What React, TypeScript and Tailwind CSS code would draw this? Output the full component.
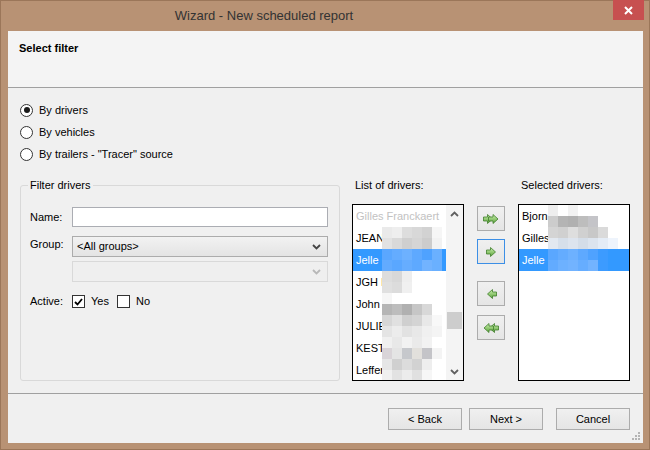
import React from 'react';

type Cells = string[][];

interface Driver {
  name: string;
  cells?: Cells;
  selected?: boolean;
  muted?: boolean;
}

const leftDrivers: Driver[] = [
  { name: 'Gilles Franckaert', muted: true },
  {
    name: 'JEAN',
    cells: [
      ['#eaeaea', '#eeeeee', '#dddddd', '#d8d8d8', '#d2d2d2', '#f6f6f6'],
      ['#e2e2e2', '#d9d9d9', '#cfcfcf', '#d5d5d5', '#cccccc', '#f2f2f2'],
    ],
  },
  {
    name: 'Jelle C',
    selected: true,
    cells: [
      ['#5aa7ff', '#64acff', '#6db1ff', '#5ea9ff', '#4fa2ff', '#6ab0ff'],
      ['#62abff', '#5aa7ff', '#66adff', '#5ea9ff', '#72b3ff', '#6ab0ff'],
    ],
  },
  {
    name: 'JGH I',
    cells: [
      ['#dddddd', '#d8d8d8', '#eeeeee', '#ffffff'],
      ['#e0e0e0', '#dcdcdc', '#f0f0f0', '#ffffff'],
    ],
  },
  {
    name: 'John',
    cells: [
      ['#f6f6f6', '#ffffff', '#ffffff', '#ffffff', '#ffffff'],
      ['#b5b5b5', '#bdbdbd', '#b0b0b0', '#c6c6c6', '#d8d8d8'],
    ],
  },
  {
    name: 'JULIE',
    cells: [
      ['#d6d6d6', '#e0e0e0', '#cfcfcf', '#d4d4d4', '#e8e8e8', '#f8f8f8'],
      ['#e4e4e4', '#ececec', '#e2e2e2', '#e8e8e8', '#f0f0f0', '#f4f4f4'],
    ],
  },
  {
    name: 'KEST',
    cells: [
      ['#f0f0f0', '#e8e8e8', '#f2f2f2', '#eaeaea', '#f2f2f2', '#ffffff'],
      ['#d9d4d8', '#e4e4e4', '#c6c8cc', '#e2e0dc', '#c4c4c8', '#f4f4f4'],
    ],
  },
  {
    name: 'Leffer',
    cells: [
      ['#e6e6e6', '#d0d0d0', '#dcdcdc', '#d2d2d2', '#eeeeee'],
      ['#f0f0f0', '#e2e2e2', '#ececec', '#e0e0e0', '#f6f6f6'],
    ],
  },
];

const rightDrivers: Driver[] = [
  {
    name: 'Bjorn',
    cells: [
      ['#eeeeee', '#ffffff', '#f2f2f2', '#ffffff', '#ffffff'],
      ['#cccccc', '#b4b4b4', '#b0b0b0', '#bdbdbd', '#c4c4c8'],
    ],
  },
  {
    name: 'Gilles',
    cells: [
      ['#d4d4d4', '#d0d0d0', '#dedede', '#d0d0d0', '#c8c8c8', '#dadada', '#ffffff'],
      ['#e2e8f0', '#d6dfea', '#dde4ee', '#d4dde8', '#dce4ee', '#e4ecf6', '#eef4fc'],
    ],
  },
  {
    name: 'Jelle C',
    selected: true,
    cells: [
      ['#5aa7ff', '#64acff', '#6db1ff', '#5ea9ff', '#4fa2ff', '#3c9bff'],
      ['#62abff', '#6db1ff', '#72b3ff', '#66adff', '#72b3ff', '#3c9bff'],
    ],
  },
];

const Mosaic = ({ cells }: { cells: Cells }) => (
  <div className="flex flex-col">
    {cells.map((row, i) => (
      <div key={i} className="flex">
        {row.map((c, j) => (
          <div key={j} className="w-[10px] h-[11px]" style={{ backgroundColor: c }} />
        ))}
      </div>
    ))}
  </div>
);

const ListRow = ({ d }: { d: Driver }) => (
  <div
    className={`relative flex items-center h-[22px] pl-[3px] whitespace-nowrap ${
      d.selected ? 'bg-[#3399ff] text-white' : d.muted ? 'text-[#c2c2c2]' : 'text-black'
    }`}
  >
    <span>{d.name}</span>
    {d.cells && (
      <div className="absolute left-[29px] top-0">
        <Mosaic cells={d.cells} />
      </div>
    )}
  </div>
);

const Chevron = ({ up, color = '#606060' }: { up?: boolean; color?: string }) => (
  <svg width="9" height="6" viewBox="0 0 9 6">
    <path
      d={up ? 'M1 5 L4.5 1.5 L8 5' : 'M1 1 L4.5 4.5 L8 1'}
      fill="none"
      stroke={color}
      strokeWidth="1.8"
    />
  </svg>
);

const GreenArrow = ({ id, dir, double }: { id: string; dir: 'left' | 'right'; double?: boolean }) => {
  const arrow = 'M0.5 3 H4.5 V0.5 L9.5 5 L4.5 9.5 V7 H0.5 Z';
  return (
    <svg
      width={double ? 16 : 11}
      height="10"
      viewBox={double ? '0 0 16 10' : '0 0 11 10'}
      style={{ transform: dir === 'left' ? 'scaleX(-1)' : undefined }}
    >
      <defs>
        <linearGradient id={id} x1="0" y1="0" x2="0" y2="1">
          <stop offset="0" stopColor="#cdf2b0" />
          <stop offset="1" stopColor="#5aa23a" />
        </linearGradient>
      </defs>
      <path d={arrow} fill={`url(#${id})`} stroke="#3f7d2b" strokeWidth="0.8" strokeLinejoin="round" />
      {double && (
        <path
          d="M5.5 3 H10 V0.5 L15 5 L10 9.5 V7 H5.5 Z"
          fill={`url(#${id})`}
          stroke="#3f7d2b"
          strokeWidth="0.8"
          strokeLinejoin="round"
        />
      )}
    </svg>
  );
};

const Radio = ({ checked, label }: { checked?: boolean; label: string }) => (
  <div className="flex items-center h-[22px]">
    <div className="w-[13px] h-[13px] rounded-full border border-[#333333] bg-white flex items-center justify-center">
      {checked && <div className="w-[6px] h-[6px] rounded-full bg-[#1a1a1a]" />}
    </div>
    <span className="ml-[6px]">{label}</span>
  </div>
);

const Checkbox = ({ checked }: { checked?: boolean }) => (
  <div className="w-[13px] h-[13px] border border-[#333333] bg-white flex items-center justify-center">
    {checked && (
      <svg width="9" height="8" viewBox="0 0 9 8">
        <path d="M1 4 L3.5 6.5 L8 1" fill="none" stroke="#000" strokeWidth="1.8" />
      </svg>
    )}
  </div>
);

const Btn = ({ children }: { children: React.ReactNode }) => (
  <div className="w-[74px] h-[22px] flex items-center justify-center bg-gradient-to-b from-[#f0f0f0] to-[#e5e5e5] border border-[#acacac]">
    {children}
  </div>
);

const MoveBtn = ({ children, focused }: { children: React.ReactNode; focused?: boolean }) => (
  <div
    className={`w-[28px] h-[25px] flex items-center justify-center bg-gradient-to-b from-[#f0f0f0] to-[#e5e5e5] border ${
      focused ? 'border-[#3c8fe6]' : 'border-[#acacac]'
    }`}
  >
    {children}
  </div>
);

export default function App() {
  return (
    <div className="w-[650px] h-[450px] bg-[#b89274] border border-[#9b7659] flex flex-col font-['Liberation_Sans',Arial,sans-serif] text-[11px] text-black">
      {/* Title bar */}
      <div className="h-[30px] flex items-start">
        <div className="flex-1 text-center pt-[7px] pr-[86px] text-[13px] leading-[15px] text-[#333333]">
          Wizard - New scheduled report
        </div>
        <div className="w-[31px] h-[20px] -mt-[1px] mr-[5px] bg-[#c75050] flex items-center justify-center">
          <svg width="9" height="9" viewBox="0 0 9 9">
            <path d="M1 1 L8 8 M8 1 L1 8" stroke="#ffffff" strokeWidth="2" />
          </svg>
        </div>
      </div>

      {/* Content */}
      <div className="flex-1 ml-[7px] mr-[6px] mb-[6px] bg-[#f0f0f0] flex flex-col">
        <div className="h-[57px] bg-[#f4f4f4] border-b border-[#a0a0a0] pl-[11px] pt-[11px] font-bold leading-[13px]">
          Select filter
        </div>

        <div className="flex-1 pl-[12px] pt-[11px] leading-[13px]">
          <Radio checked label="By drivers" />
          <Radio label="By vehicles" />
          <Radio label={'By trailers - "Tracer" source'} />

          <div className="flex items-start mt-[14px]">
            <fieldset className="w-[320px] h-[202px] border border-[#d9d9d9] rounded-[3px] pl-[7px]">
              <legend className="px-[2px] leading-[13px]">Filter drivers</legend>
              <div className="ml-[2px] mt-[15px]">
                <div className="flex items-center">
                  <span className="w-[42px]">Name:</span>
                  <div className="w-[256px] h-[20px] bg-white border border-[#abadb3]" />
                </div>
                <div className="flex items-start mt-[9px]">
                  <span className="w-[42px] pt-[2px]">Group:</span>
                  <div className="flex flex-col">
                    <div className="w-[256px] h-[21px] bg-gradient-to-b from-[#f2f2f2] to-[#e4e4e4] border border-[#acacac] flex items-center justify-between pl-[4px] pr-[6px]">
                      <span>&lt;All groups&gt;</span>
                      <Chevron color="#444444" />
                    </div>
                    <div className="w-[256px] h-[21px] mt-[4px] bg-[#efefef] border border-[#d9d9d9] flex items-center justify-end pr-[6px]">
                      <Chevron color="#b8b8b8" />
                    </div>
                  </div>
                </div>
                <div className="flex items-center mt-[13px]">
                  <span className="w-[42px]">Active:</span>
                  <Checkbox checked />
                  <span className="ml-[6px]">Yes</span>
                  <div className="ml-[8px]">
                    <Checkbox />
                  </div>
                  <span className="ml-[6px]">No</span>
                </div>
              </div>
            </fieldset>

            {/* List of drivers */}
            <div className="ml-[12px] flex flex-col">
              <span className="pl-[3px] leading-[13px]">List of drivers:</span>
              <div className="mt-[12px] w-[112px] h-[177px] border border-black bg-white flex overflow-hidden">
                <div className="flex-1 overflow-hidden">
                  {leftDrivers.map((d) => (
                    <ListRow key={d.name} d={d} />
                  ))}
                </div>
                <div className="w-[17px] bg-[#f4f4f4] flex flex-col">
                  <div className="h-[17px] flex items-center justify-center">
                    <Chevron up />
                  </div>
                  <div className="flex-1">
                    <div className="mt-[90px] h-[17px] mx-[1px] bg-[#cdcdcd]" />
                  </div>
                  <div className="h-[17px] flex items-center justify-center">
                    <Chevron />
                  </div>
                </div>
              </div>
            </div>

            {/* Move buttons */}
            <div className="ml-[13px] pt-[27px] flex flex-col">
              <MoveBtn>
                <GreenArrow id="g1" dir="right" double />
              </MoveBtn>
              <div className="mt-[8px]">
                <MoveBtn focused>
                  <GreenArrow id="g2" dir="right" />
                </MoveBtn>
              </div>
              <div className="mt-[17px]">
                <MoveBtn>
                  <GreenArrow id="g3" dir="left" />
                </MoveBtn>
              </div>
              <div className="mt-[9px]">
                <MoveBtn>
                  <GreenArrow id="g4" dir="left" double />
                </MoveBtn>
              </div>
            </div>

            {/* Selected drivers */}
            <div className="ml-[13px] flex flex-col">
              <span className="pl-[3px] leading-[13px]">Selected drivers:</span>
              <div className="mt-[12px] w-[112px] h-[177px] border border-black bg-white overflow-hidden">
                {rightDrivers.map((d) => (
                  <ListRow key={d.name} d={d} />
                ))}
              </div>
            </div>
          </div>
        </div>

        {/* Footer */}
        <div className="relative h-[50px] border-t border-[#a0a0a0] pt-[14px] pr-[13px] flex justify-end items-start">
          <Btn>&lt; Back</Btn>
          <div className="ml-[7px]">
            <Btn>Next &gt;</Btn>
          </div>
          <div className="ml-[13px]">
            <Btn>Cancel</Btn>
          </div>
          <svg className="absolute right-[2px] bottom-[2px]" width="9" height="9" viewBox="0 0 9 9">
            <rect x="6" y="0" width="2" height="2" fill="#b4b4b4" />
            <rect x="6" y="3" width="2" height="2" fill="#b4b4b4" />
            <rect x="3" y="3" width="2" height="2" fill="#b4b4b4" />
            <rect x="6" y="6" width="2" height="2" fill="#b4b4b4" />
            <rect x="3" y="6" width="2" height="2" fill="#b4b4b4" />
            <rect x="0" y="6" width="2" height="2" fill="#b4b4b4" />
          </svg>
        </div>
      </div>
    </div>
  );
}
